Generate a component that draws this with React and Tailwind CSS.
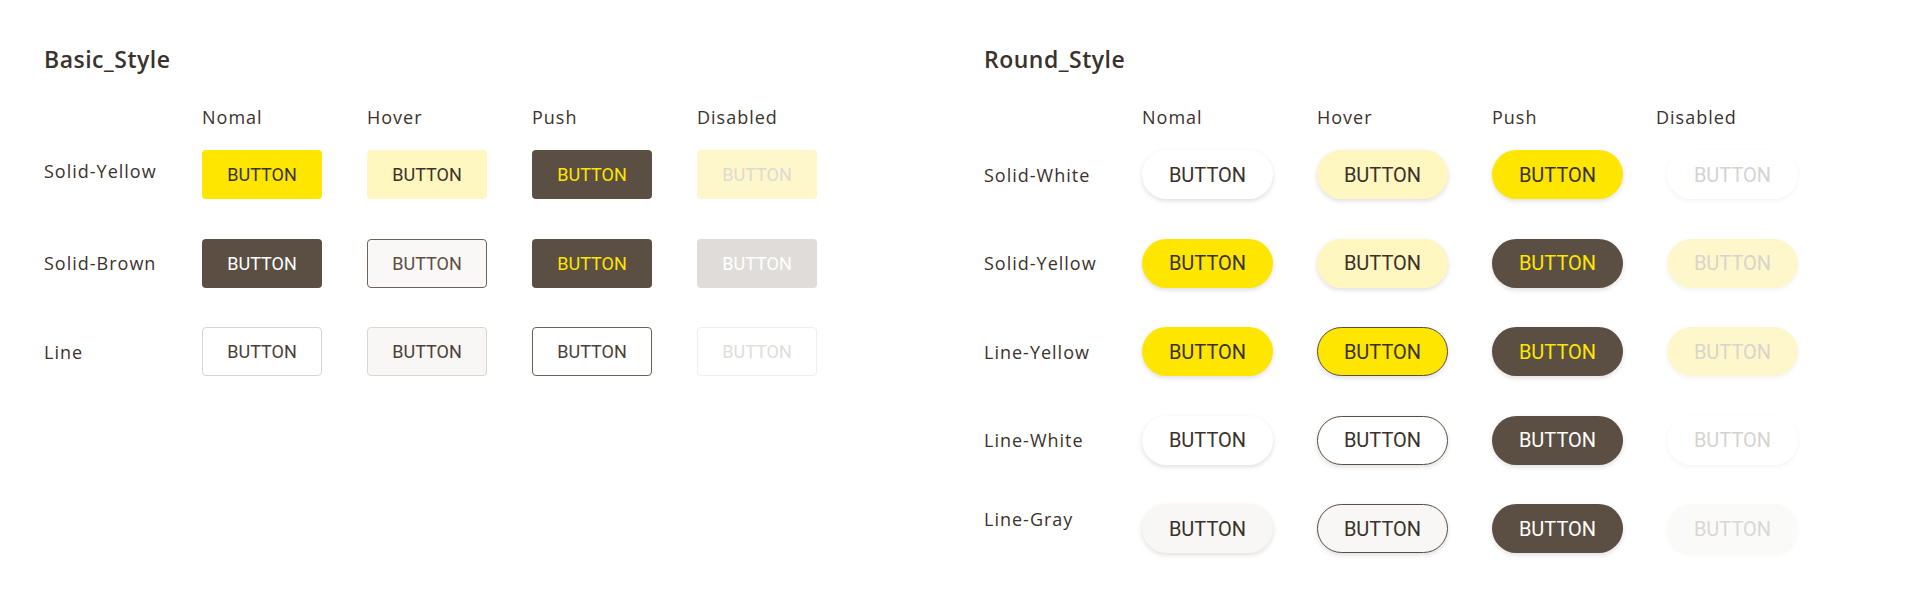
import React from "react";

const FONT = { fontFamily: '"Open Sans", "Noto Sans", sans-serif' };
const BTN_FONT = { fontFamily: 'Roboto, "Noto Sans", sans-serif' };

const basicRows = [
  {
    label: "Solid-Yellow",
    labelCls: "pb-[8px]",
    btns: [
      "bg-[#FFE600] text-[#3A322B]",
      "bg-[#FFF6C0] text-[#3A322B]",
      "bg-[#5B4E42] text-[#FFE600]",
      "bg-[#FFF7CC] text-[#DEDAD2]",
    ],
  },
  {
    label: "Solid-Brown",
    labelCls: "",
    btns: [
      "bg-[#5B4E42] text-white",
      "bg-[#F9F8F6] border border-[#6E6257] text-[#5B4E42]",
      "bg-[#5B4E42] text-[#FFE600]",
      "bg-[#DFDCD9] text-white",
    ],
  },
  {
    label: "Line",
    labelCls: "",
    btns: [
      "bg-white border border-[#D8D4CF] text-[#4A4038]",
      "bg-[#F8F7F5] border border-[#DAD6D1] text-[#4A4038]",
      "bg-white border border-[#6E6257] text-[#4A4038]",
      "bg-white border border-[#F1EFED] text-[#E0DDDA]",
    ],
  },
];

const roundRows = [
  {
    label: "Solid-White",
    labelCls: "",
    btns: [
      "bg-white text-[#3A312A] shadow-[0_2px_5px_rgba(0,0,0,0.13)]",
      "bg-[#FFF6C0] text-[#3A312A] shadow-[0_2px_5px_rgba(0,0,0,0.13)]",
      "bg-[#FFE600] text-[#3A312A] shadow-[0_2px_5px_rgba(0,0,0,0.13)]",
      "bg-white text-[#D6D3CF] shadow-[0_2px_5px_rgba(0,0,0,0.05)]",
    ],
  },
  {
    label: "Solid-Yellow",
    labelCls: "",
    btns: [
      "bg-[#FFE600] text-[#3A312A] shadow-[0_2px_5px_rgba(0,0,0,0.13)]",
      "bg-[#FFF6C0] text-[#3A312A] shadow-[0_2px_5px_rgba(0,0,0,0.13)]",
      "bg-[#5B4E42] text-[#FFE600] shadow-[0_2px_5px_rgba(0,0,0,0.13)]",
      "bg-[#FFF7CC] text-[#D8D4CD] shadow-[0_2px_5px_rgba(0,0,0,0.05)]",
    ],
  },
  {
    label: "Line-Yellow",
    labelCls: "",
    btns: [
      "bg-[#FFE600] text-[#3A312A] shadow-[0_2px_5px_rgba(0,0,0,0.13)]",
      "bg-[#FFE600] border border-[#5B4E42] text-[#3A312A] shadow-[0_2px_5px_rgba(0,0,0,0.13)]",
      "bg-[#5B4E42] text-[#FFE600] shadow-[0_2px_5px_rgba(0,0,0,0.13)]",
      "bg-[#FFF7CC] text-[#D8D4CD] shadow-[0_2px_5px_rgba(0,0,0,0.05)]",
    ],
  },
  {
    label: "Line-White",
    labelCls: "",
    btns: [
      "bg-white text-[#3A312A] shadow-[0_2px_5px_rgba(0,0,0,0.13)]",
      "bg-white border border-[#5B4E42] text-[#3A312A] shadow-[0_2px_5px_rgba(0,0,0,0.13)]",
      "bg-[#5B4E42] text-white shadow-[0_2px_5px_rgba(0,0,0,0.13)]",
      "bg-white text-[#D6D3CF] shadow-[0_2px_5px_rgba(0,0,0,0.05)]",
    ],
  },
  {
    label: "Line-Gray",
    labelCls: "pb-[20px]",
    btns: [
      "bg-[#F8F7F5] text-[#3A312A] shadow-[0_2px_5px_rgba(0,0,0,0.13)]",
      "bg-[#F8F7F5] border border-[#5B4E42] text-[#3A312A] shadow-[0_2px_5px_rgba(0,0,0,0.13)]",
      "bg-[#5B4E42] text-white shadow-[0_2px_5px_rgba(0,0,0,0.13)]",
      "bg-[#FAFAF9] text-[#DAD7D3] shadow-[0_2px_5px_rgba(0,0,0,0.04)]",
    ],
  },
];

const headers = ["Nomal", "Hover", "Push", "Disabled"];

function Section({ title, rows, round }) {
  const colW = round ? "w-[131px]" : "w-[120px]";
  const gap = round ? "gap-[44px]" : "gap-[45px]";
  return (
    <div className="flex flex-col">
      <h2
        className="h-[30px] leading-[30px] text-[23px] font-semibold tracking-[0.5px] text-[#3A322C] mt-[44px]"
        style={FONT}
      >
        {title}
      </h2>
      <div className="flex mt-[30px] h-[26px] items-center">
        <div className="w-[158px]" />
        <div className={`flex ${gap}`}>
          {headers.map((h, i) => (
            <div
              key={h}
              className={`${colW} whitespace-nowrap text-[18px] leading-[26px] tracking-[1px] text-[#3A322C] ${
                round && i === 3 ? "-ml-[11px]" : ""
              }`}
              style={FONT}
            >
              {h}
            </div>
          ))}
        </div>
      </div>
      <div className="flex flex-col gap-[39.5px] mt-[20px]">
        {rows.map((r) => (
          <div key={r.label} className="flex items-center h-[49px]">
            <div
              className={`w-[158px] text-[18px] leading-[24px] tracking-[1px] text-[#3A322C] ${r.labelCls}`}
              style={FONT}
            >
              {r.label}
            </div>
            <div className={`flex ${gap}`}>
              {r.btns.map((c, i) => (
                <div
                  key={i}
                  className={`${colW} h-[49px] flex items-center justify-center ${
                    round ? "rounded-full text-[20px]" : "rounded-[4px] text-[18px]"
                  } ${c}`}
                  style={BTN_FONT}
                >
                  BUTTON
                </div>
              ))}
            </div>
          </div>
        ))}
      </div>
    </div>
  );
}

export default function App() {
  return (
    <div className="w-[1920px] h-[598px] bg-white flex overflow-hidden">
      <div className="w-[984px] pl-[44px]">
        <Section title="Basic_Style" rows={basicRows} round={false} />
      </div>
      <div className="flex-1">
        <Section title="Round_Style" rows={roundRows} round={true} />
      </div>
    </div>
  );
}
